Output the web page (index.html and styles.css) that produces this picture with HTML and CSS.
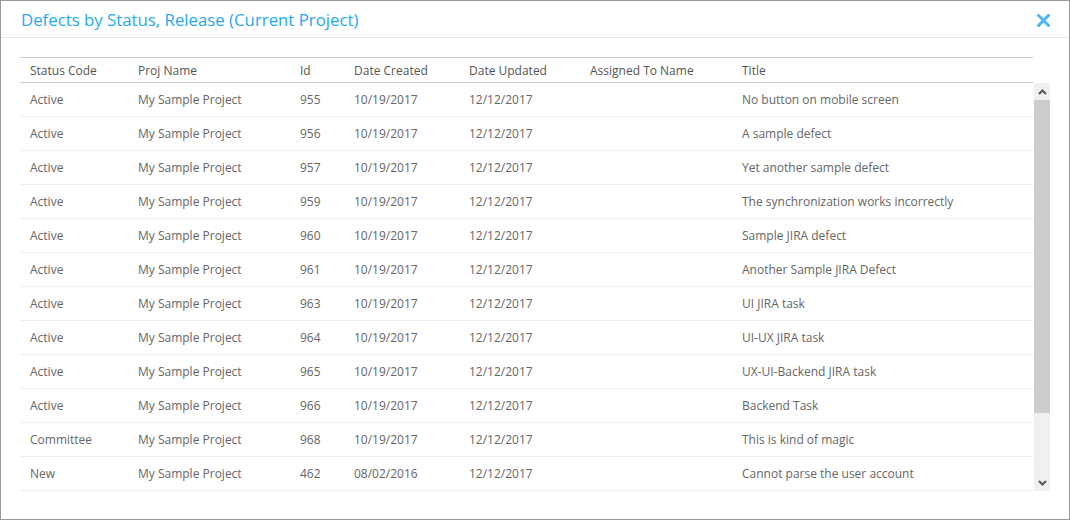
FILE: index.html
```html
<!DOCTYPE html>
<html>
  <head>
    <meta charset="UTF-8">
    <title>Defects by Status, Release</title>
    <link rel="stylesheet" href="styles.css">
  </head>
  <body>
    <div id="dialog">
      <div id="header">
        <p class="title">Defects by Status, Release (Current Project)</p>
        <a href="#" class="close" id="close">
          <svg width="13" height="13" viewBox="0 0 13 13"><path d="M1.5 1.5 L11.5 11.5 M11.5 1.5 L1.5 11.5" stroke="#4cb8f2" stroke-width="3" stroke-linecap="square"/></svg>
        </a>
      </div>
      <div id="main">
        <table class="grid head">
          <colgroup>
            <col class="c1"><col class="c2"><col class="c3"><col class="c4"><col class="c5"><col class="c6"><col class="c7">
          </colgroup>
          <tr>
            <th>Status Code</th><th>Proj Name</th><th>Id</th><th>Date Created</th><th>Date Updated</th><th>Assigned To Name</th><th>Title</th>
          </tr>
        </table>
        <div class="body-wrap">
          <table class="grid body">
            <colgroup>
              <col class="c1"><col class="c2"><col class="c3"><col class="c4"><col class="c5"><col class="c6"><col class="c7">
            </colgroup>
            <tr><td>Active</td><td>My Sample Project</td><td>955</td><td>10/19/2017</td><td>12/12/2017</td><td></td><td>No button on mobile screen</td></tr>
            <tr><td>Active</td><td>My Sample Project</td><td>956</td><td>10/19/2017</td><td>12/12/2017</td><td></td><td>A sample defect</td></tr>
            <tr><td>Active</td><td>My Sample Project</td><td>957</td><td>10/19/2017</td><td>12/12/2017</td><td></td><td>Yet another sample defect</td></tr>
            <tr><td>Active</td><td>My Sample Project</td><td>959</td><td>10/19/2017</td><td>12/12/2017</td><td></td><td>The synchronization works incorrectly</td></tr>
            <tr><td>Active</td><td>My Sample Project</td><td>960</td><td>10/19/2017</td><td>12/12/2017</td><td></td><td>Sample JIRA defect</td></tr>
            <tr><td>Active</td><td>My Sample Project</td><td>961</td><td>10/19/2017</td><td>12/12/2017</td><td></td><td>Another Sample JIRA Defect</td></tr>
            <tr><td>Active</td><td>My Sample Project</td><td>963</td><td>10/19/2017</td><td>12/12/2017</td><td></td><td>UI JIRA task</td></tr>
            <tr><td>Active</td><td>My Sample Project</td><td>964</td><td>10/19/2017</td><td>12/12/2017</td><td></td><td>UI-UX JIRA task</td></tr>
            <tr><td>Active</td><td>My Sample Project</td><td>965</td><td>10/19/2017</td><td>12/12/2017</td><td></td><td>UX-UI-Backend JIRA task</td></tr>
            <tr><td>Active</td><td>My Sample Project</td><td>966</td><td>10/19/2017</td><td>12/12/2017</td><td></td><td>Backend Task</td></tr>
            <tr><td>Committee</td><td>My Sample Project</td><td>968</td><td>10/19/2017</td><td>12/12/2017</td><td></td><td>This is kind of magic</td></tr>
            <tr><td>New</td><td>My Sample Project</td><td>462</td><td>08/02/2016</td><td>12/12/2017</td><td></td><td>Cannot parse the user account</td></tr>
          </table>
          <div class="scrollbar">
            <div class="sb-btn">
              <svg width="9" height="6" viewBox="0 0 9 6"><path d="M1 5 L4.5 1.5 L8 5" fill="none" stroke="#555" stroke-width="2"/></svg>
            </div>
            <div class="sb-track"><div class="sb-thumb"></div></div>
            <div class="sb-btn">
              <svg width="9" height="6" viewBox="0 0 9 6"><path d="M1 1 L4.5 4.5 L8 1" fill="none" stroke="#555" stroke-width="2"/></svg>
            </div>
          </div>
        </div>
      </div>
    </div>
  </body>
</html>
```

FILE: styles.css
```css
html, body {
  margin: 0;
  padding: 0;
  background-color: #fff;
}
body {
  font-family: 'Open Sans', 'Noto Sans', sans-serif;
  color: #666;
  overflow: hidden;
}
#dialog {
  box-sizing: border-box;
  width: 1070px;
  height: 520px;
  border: 1px solid #999;
}
#header {
  display: flex;
  align-items: center;
  justify-content: space-between;
  height: 36px;
  border-bottom: 1px solid #e6e6e6;
  padding: 0 19px 0 20px;
}
p.title {
  margin: 0;
  font-size: 16.8px;
  color: #26a9f1;
  padding-top: 1px;
}
a.close {
  display: block;
  width: 13px;
  height: 13px;
  margin-top: 2px;
}
a.close svg {
  display: block;
}
#main {
  padding: 19px 0 0 19px;
}
table.grid {
  border-collapse: collapse;
  table-layout: fixed;
  width: 1013px;
  font-size: 12px;
}
col.c1 { width: 108px; }
col.c2 { width: 162px; }
col.c3 { width: 54px; }
col.c4 { width: 115px; }
col.c5 { width: 121px; }
col.c6 { width: 152px; }
col.c7 { width: auto; }
table.head {
  border-top: 1px solid #ccc;
}
th {
  text-align: left;
  font-weight: normal;
  color: #555;
  height: 24px;
  padding: 0 0 0 10px;
  border-bottom: 1px solid #ccc;
  white-space: nowrap;
}
.body-wrap {
  display: flex;
  align-items: flex-start;
}
td {
  height: 33px;
  padding: 0 0 0 10px;
  border-bottom: 1px solid #eee;
  white-space: nowrap;
  vertical-align: middle;
}
.scrollbar {
  display: flex;
  flex-direction: column;
  width: 16px;
  height: 408px;
  margin-left: 1px;
  background-color: #f0f0f0;
}
.sb-btn {
  display: flex;
  align-items: center;
  justify-content: center;
  height: 17px;
}
.sb-track {
  flex: 1;
}
.sb-thumb {
  height: 313px;
  background-color: #cdcdcd;
}
```
